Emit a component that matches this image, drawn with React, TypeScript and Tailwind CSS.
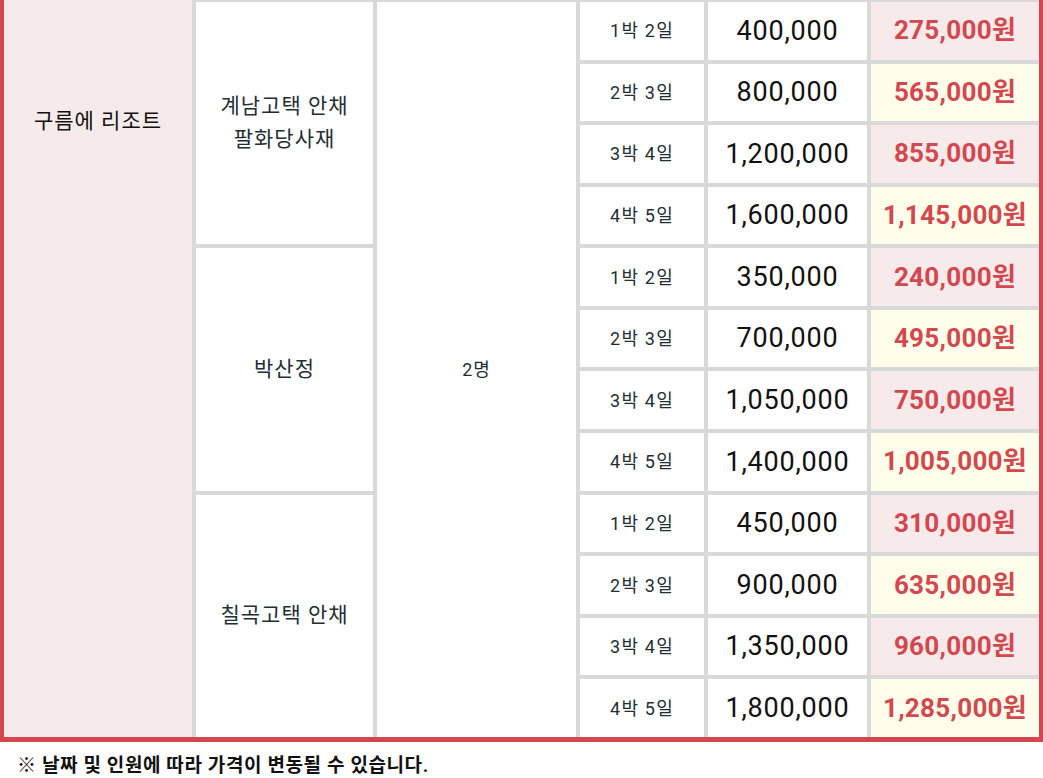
import React from "react";

const FONT = "font-['Roboto','Noto_Sans_CJK_KR',sans-serif]";

const rows = [
  ["1박 2일", "400,000", "275,000원"],
  ["2박 3일", "800,000", "565,000원"],
  ["3박 4일", "1,200,000", "855,000원"],
  ["4박 5일", "1,600,000", "1,145,000원"],
  ["1박 2일", "350,000", "240,000원"],
  ["2박 3일", "700,000", "495,000원"],
  ["3박 4일", "1,050,000", "750,000원"],
  ["4박 5일", "1,400,000", "1,005,000원"],
  ["1박 2일", "450,000", "310,000원"],
  ["2박 3일", "900,000", "635,000원"],
  ["3박 4일", "1,350,000", "960,000원"],
  ["4박 5일", "1,800,000", "1,285,000원"],
];

const rowStarts = [
  "row-start-1",
  "row-start-2",
  "row-start-3",
  "row-start-4",
  "row-start-5",
  "row-start-6",
  "row-start-7",
  "row-start-8",
  "row-start-9",
  "row-start-10",
  "row-start-11",
  "row-start-12",
];

export default function App() {
  return (
    <div className={`w-[1043px] h-[778px] bg-white ${FONT}`}>
      <div className="flex h-[742px] border-x-4 border-b-[5px] border-[#d4474f]">
        <div className="w-[188px] bg-[#f6eaea] flex justify-center pt-[107px]">
          <span className="text-[21px] tracking-[1px] text-[#111] leading-[28px]">구름에 리조트</span>
        </div>
        <div className="w-[4px] bg-[#d9d9d9]" />
        <div className="flex-1 bg-[#d9d9d9] pt-[2px]">
          <div className="grid h-full grid-cols-[177px_199px_124px_159px_168px] grid-rows-[repeat(12,minmax(0,1fr))] gap-[4px]">
            <div className="col-start-1 row-start-1 row-span-4 bg-white flex flex-col items-center justify-center text-[21px] tracking-[1px] leading-[33px] text-[#1f2f35]">
              <span>계남고택 안채</span>
              <span>팔화당사재</span>
            </div>
            <div className="col-start-1 row-start-5 row-span-4 bg-white flex items-center justify-center text-[21px] tracking-[1px] text-[#1f2f35]">
              박산정
            </div>
            <div className="col-start-1 row-start-9 row-span-4 bg-white flex items-center justify-center text-[21px] tracking-[1px] text-[#1f2f35]">
              칠곡고택 안채
            </div>
            <div className="col-start-2 row-start-1 row-span-12 bg-white flex items-center justify-center text-[18px] tracking-[1px] text-[#1f2f35]">
              2명
            </div>
            {rows.map((r, i) => (
              <React.Fragment key={i}>
                <div className={`col-start-3 ${rowStarts[i]} bg-white flex items-center justify-center text-[18px] tracking-[1.2px] text-[#1f2f35]`}>
                  {r[0]}
                </div>
                <div className={`col-start-4 ${rowStarts[i]} bg-white flex items-center justify-center text-[27px] text-[#111] tracking-[0.8px]`}>
                  {r[1]}
                </div>
                <div
                  className={`col-start-5 ${rowStarts[i]} ${
                    i % 2 === 0 ? "bg-[#f6eaea]" : "bg-[#fefeeb]"
                  } flex items-center justify-center text-[26px] font-bold tracking-[0.3px] text-[#d4474f]`}
                >
                  {r[2]}
                </div>
              </React.Fragment>
            ))}
          </div>
        </div>
      </div>
      <div className="pl-[17px] pt-[12px] text-[19px] font-bold tracking-[0.6px] text-[#111] leading-[24px]">
        ※ 날짜 및 인원에 따라 가격이 변동될 수 있습니다.
      </div>
    </div>
  );
}
